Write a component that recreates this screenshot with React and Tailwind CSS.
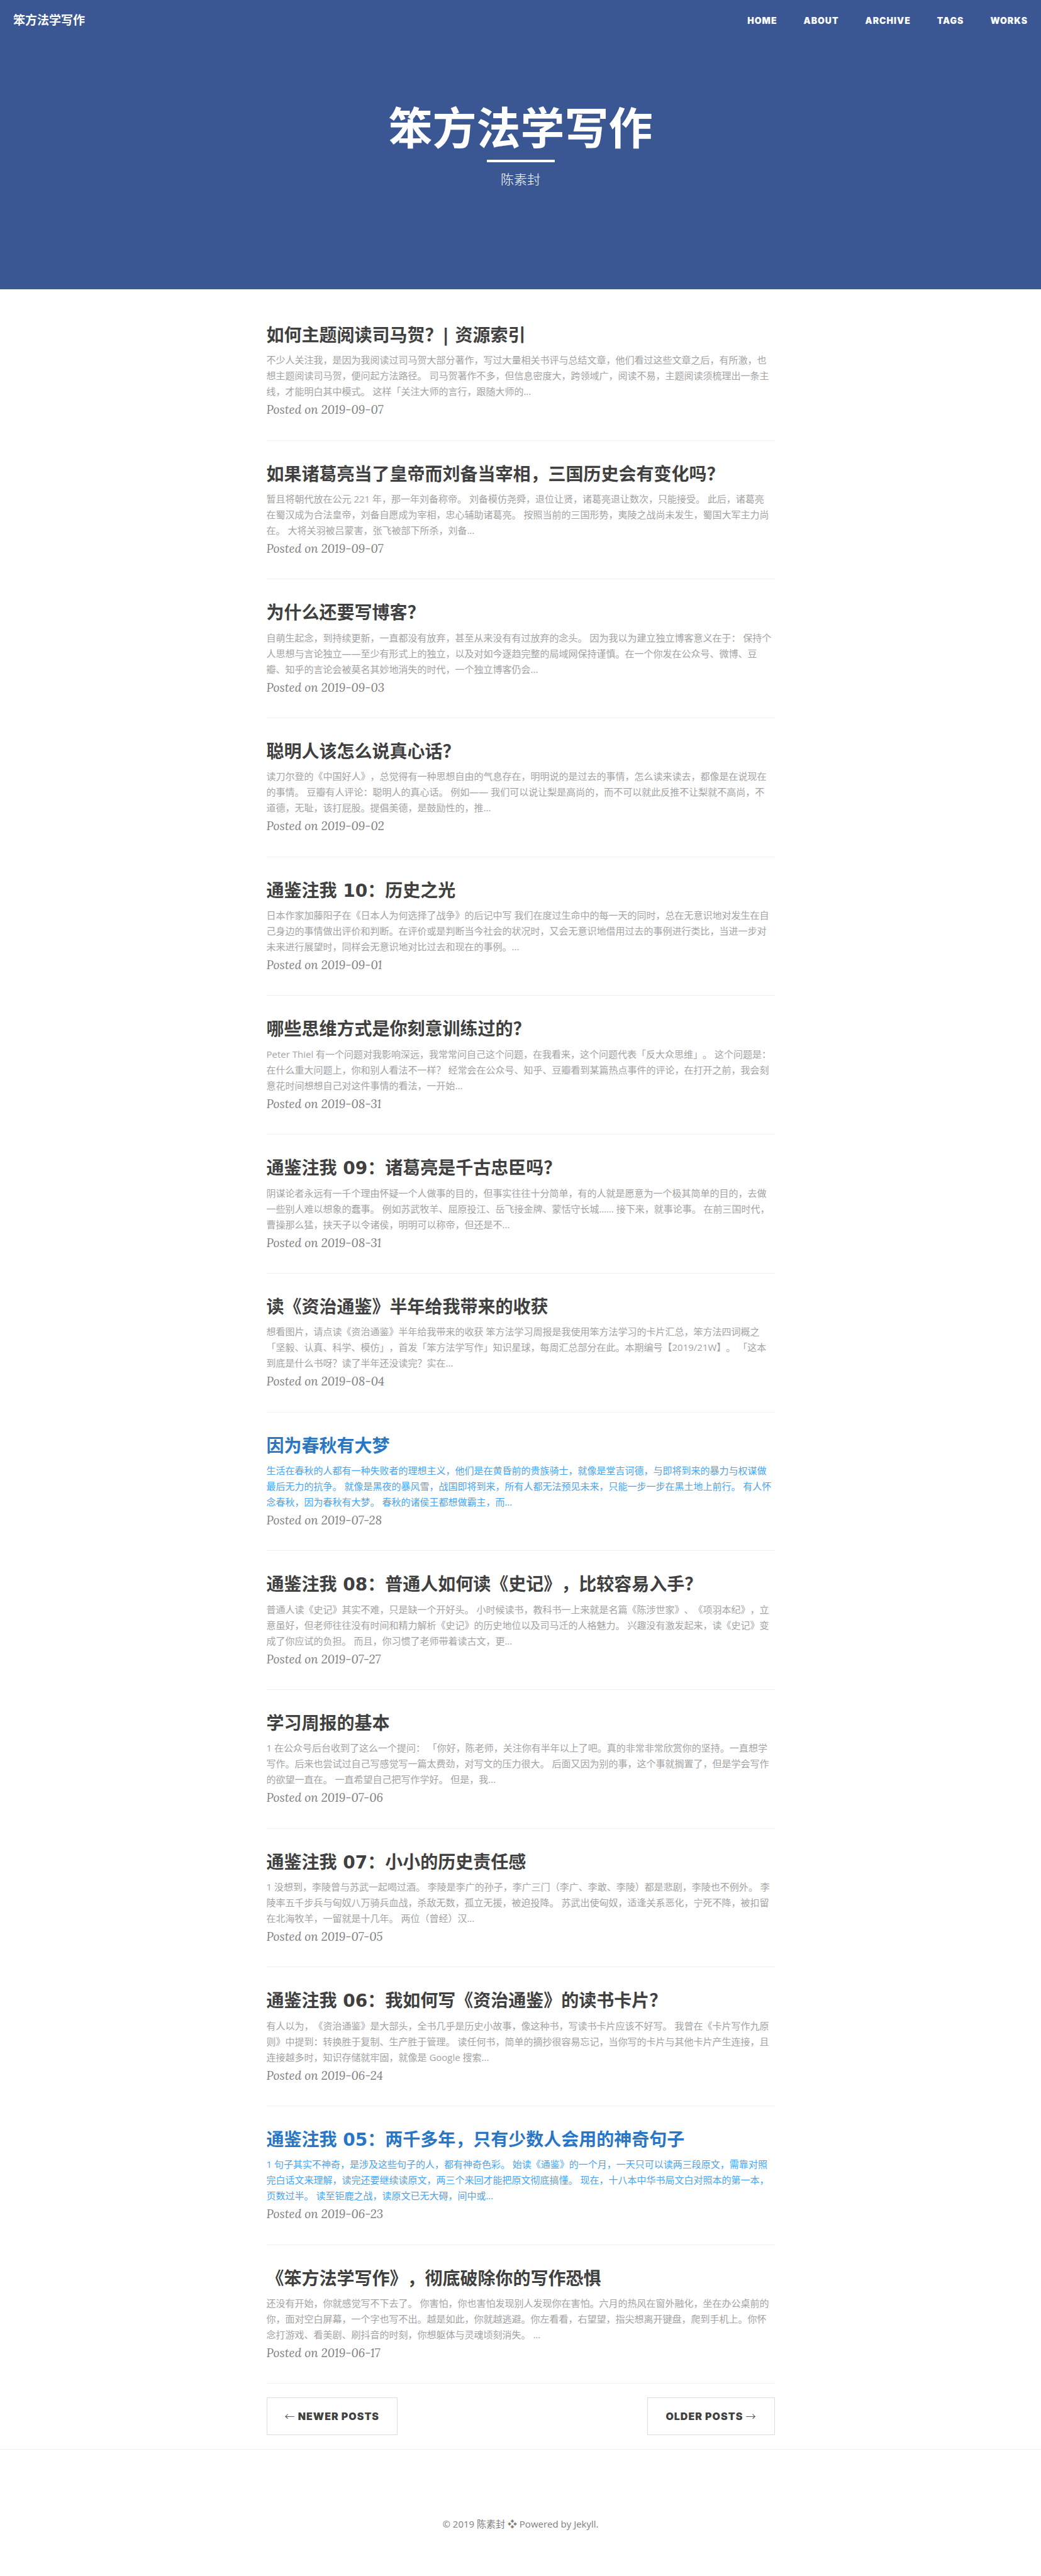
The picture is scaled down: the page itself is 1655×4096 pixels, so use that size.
const navLinks = ["Home", "About", "Archive", "Tags", "Works"];

const posts = [
  {
    title: "如何主题阅读司马贺？| 资源索引",
    date: "2019-09-07",
    lines: [
      "不少人关注我，是因为我阅读过司马贺大部分著作，写过大量相关书评与总结文章，他们看过这些文章之后，有所激，也",
      "想主题阅读司马贺，便问起方法路径。 司马贺著作不多，但信息密度大，跨领域广，阅读不易，主题阅读须梳理出一条主",
      "线，才能明白其中模式。 这样「关注大师的言行，跟随大师的...",
    ],
  },
  {
    title: "如果诸葛亮当了皇帝而刘备当宰相，三国历史会有变化吗？",
    date: "2019-09-07",
    lines: [
      "暂且将朝代放在公元 221 年，那一年刘备称帝。 刘备模仿尧舜，退位让贤，诸葛亮退让数次，只能接受。 此后，诸葛亮",
      "在蜀汉成为合法皇帝，刘备自愿成为宰相，忠心辅助诸葛亮。 按照当前的三国形势，夷陵之战尚未发生，蜀国大军主力尚",
      "在。 大将关羽被吕蒙害，张飞被部下所杀，刘备...",
    ],
  },
  {
    title: "为什么还要写博客？",
    date: "2019-09-03",
    lines: [
      "自萌生起念，到持续更新，一直都没有放弃，甚至从来没有有过放弃的念头。 因为我以为建立独立博客意义在于： 保持个",
      "人思想与言论独立——至少有形式上的独立，以及对如今逐趋完整的局域网保持谨慎。在一个你发在公众号、微博、豆",
      "瓣、知乎的言论会被莫名其妙地消失的时代，一个独立博客仍会...",
    ],
  },
  {
    title: "聪明人该怎么说真心话？",
    date: "2019-09-02",
    lines: [
      "读刀尔登的《中国好人》，总觉得有一种思想自由的气息存在，明明说的是过去的事情，怎么读来读去，都像是在说现在",
      "的事情。 豆瓣有人评论：聪明人的真心话。 例如—— 我们可以说让梨是高尚的，而不可以就此反推不让梨就不高尚，不",
      "道德，无耻，该打屁股。提倡美德，是鼓励性的，推...",
    ],
  },
  {
    title: "通鉴注我 10：历史之光",
    date: "2019-09-01",
    lines: [
      "日本作家加藤阳子在《日本人为何选择了战争》的后记中写 我们在度过生命中的每一天的同时，总在无意识地对发生在自",
      "己身边的事情做出评价和判断。在评价或是判断当今社会的状况时，又会无意识地借用过去的事例进行类比，当进一步对",
      "未来进行展望时，同样会无意识地对比过去和现在的事例。...",
    ],
  },
  {
    title: "哪些思维方式是你刻意训练过的？",
    date: "2019-08-31",
    lines: [
      "Peter Thiel 有一个问题对我影响深远，我常常问自己这个问题，在我看来，这个问题代表「反大众思维」。 这个问题是：",
      "在什么重大问题上，你和别人看法不一样？ 经常会在公众号、知乎、豆瓣看到某篇热点事件的评论，在打开之前，我会刻",
      "意花时间想想自己对这件事情的看法，一开始...",
    ],
  },
  {
    title: "通鉴注我 09：诸葛亮是千古忠臣吗？",
    date: "2019-08-31",
    lines: [
      "阴谋论者永远有一千个理由怀疑一个人做事的目的，但事实往往十分简单，有的人就是愿意为一个极其简单的目的，去做",
      "一些别人难以想象的蠢事。 例如苏武牧羊、屈原投江、岳飞接金牌、蒙恬守长城…… 接下来，就事论事。 在前三国时代，",
      "曹操那么猛，挟天子以令诸侯，明明可以称帝，但还是不...",
    ],
  },
  {
    title: "读《资治通鉴》半年给我带来的收获",
    date: "2019-08-04",
    lines: [
      "想看图片，请点读《资治通鉴》半年给我带来的收获 笨方法学习周报是我使用笨方法学习的卡片汇总，笨方法四词概之",
      "「坚毅、认真、科学、模仿」，首发「笨方法学写作」知识星球，每周汇总部分在此。本期编号【2019/21W】。 「这本",
      "到底是什么书呀？读了半年还没读完？实在...",
    ],
  },
  {
    title: "因为春秋有大梦",
    date: "2019-07-28",
    active: true,
    lines: [
      "生活在春秋的人都有一种失败者的理想主义，他们是在黄昏前的贵族骑士，就像是堂吉诃德，与即将到来的暴力与权谋做",
      "最后无力的抗争。 就像是黑夜的暴风雪，战国即将到来，所有人都无法预见未来，只能一步一步在黑土地上前行。 有人怀",
      "念春秋，因为春秋有大梦。 春秋的诸侯王都想做霸主，而...",
    ],
  },
  {
    title: "通鉴注我 08：普通人如何读《史记》，比较容易入手？",
    date: "2019-07-27",
    lines: [
      "普通人读《史记》其实不难，只是缺一个开好头。 小时候读书，教科书一上来就是名篇《陈涉世家》、《项羽本纪》，立",
      "意虽好，但老师往往没有时间和精力解析《史记》的历史地位以及司马迁的人格魅力。 兴趣没有激发起来，读《史记》变",
      "成了你应试的负担。 而且，你习惯了老师带着读古文，更...",
    ],
  },
  {
    title: "学习周报的基本",
    date: "2019-07-06",
    lines: [
      "1 在公众号后台收到了这么一个提问： 「你好，陈老师，关注你有半年以上了吧。真的非常非常欣赏你的坚持。一直想学",
      "写作。后来也尝试过自己写感觉写一篇太费劲，对写文的压力很大。 后面又因为别的事，这个事就搁置了，但是学会写作",
      "的欲望一直在。 一直希望自己把写作学好。 但是，我...",
    ],
  },
  {
    title: "通鉴注我 07：小小的历史责任感",
    date: "2019-07-05",
    lines: [
      "1 没想到，李陵曾与苏武一起喝过酒。 李陵是李广的孙子，李广三门（李广、李敢、李陵）都是悲剧，李陵也不例外。 李",
      "陵率五千步兵与匈奴八万骑兵血战，杀敌无数，孤立无援，被迫投降。 苏武出使匈奴，适逢关系恶化，宁死不降，被扣留",
      "在北海牧羊，一留就是十几年。 两位（曾经）汉...",
    ],
  },
  {
    title: "通鉴注我 06：我如何写《资治通鉴》的读书卡片？",
    date: "2019-06-24",
    lines: [
      "有人以为，《资治通鉴》是大部头，全书几乎是历史小故事，像这种书，写读书卡片应该不好写。 我曾在《卡片写作九原",
      "则》中提到：转换胜于复制、生产胜于管理。 读任何书，简单的摘抄很容易忘记，当你写的卡片与其他卡片产生连接，且",
      "连接越多时，知识存储就牢固，就像是 Google 搜索...",
    ],
  },
  {
    title: "通鉴注我 05：两千多年，只有少数人会用的神奇句子",
    date: "2019-06-23",
    active: true,
    lines: [
      "1 句子其实不神奇，是涉及这些句子的人，都有神奇色彩。 始读《通鉴》的一个月，一天只可以读两三段原文，需靠对照",
      "完白话文来理解，读完还要继续读原文，两三个来回才能把原文彻底搞懂。 现在，十八本中华书局文白对照本的第一本，",
      "页数过半。 读至钜鹿之战，读原文已无大碍，间中或...",
    ],
  },
  {
    title: "《笨方法学写作》，彻底破除你的写作恐惧",
    date: "2019-06-17",
    lines: [
      "还没有开始，你就感觉写不下去了。 你害怕，你也害怕发现别人发现你在害怕。六月的热风在窗外融化，坐在办公桌前的",
      "你，面对空白屏幕，一个字也写不出。越是如此，你就越逃避。你左看看，右望望，指尖想离开键盘，爬到手机上。你怀",
      "念打游戏、看美剧、刷抖音的时刻，你想躯体与灵魂顷刻消失。 ...",
    ],
  },
];

function Header() {
  return (
    <header className="bg-[#3a5793] pb-[160px] text-white">
      <nav className="flex h-16 items-center justify-between px-[21px]">
        <a href="#" className="text-[19px] leading-8 font-bold">
          笨方法学写作
        </a>
        <ul className="flex gap-[42px]">
          {navLinks.map((label) => (
            <li key={label}>
              <a
                href="#"
                className="font-['Arial_Black','Inter',sans-serif] text-[14px] leading-5 font-black tracking-[1px] uppercase"
              >
                {label}
              </a>
            </li>
          ))}
        </ul>
      </nav>
      <div className="flex flex-col items-center pt-[100px]">
        <h1 className="text-[70px] leading-[78px] font-bold">笨方法学写作</h1>
        <hr className="mt-3 h-1 w-[108px] border-0 bg-white" />
        <p className="mt-[13px] text-[21px] leading-[29px] font-light">陈素封</p>
      </div>
    </header>
  );
}

function PostPreview({ post }) {
  return (
    <article className="border-b border-[#eeeeee] pt-9 pb-8">
      <a href="#">
        <h2
          className={`font-['DejaVu_Sans','Noto_Sans_CJK_SC',sans-serif] text-[28px] leading-[1.3] font-bold whitespace-nowrap ${
            post.active ? "text-[#2977c4]" : "text-[#404040]"
          }`}
        >
          {post.title}
        </h2>
        <p
          className={`mt-2 text-[15px] leading-[25px] ${
            post.active ? "text-[#4aa3ee]" : "text-[#a3a3a3]"
          }`}
        >
          {post.lines.map((line) => (
            <span key={line} className="block whitespace-nowrap">
              {line}
            </span>
          ))}
        </p>
      </a>
      <p className="font-['Lora','Liberation_Serif',serif] text-[19px] leading-[1.7] text-[#808080] italic">
        Posted on {post.date}
      </p>
    </article>
  );
}

function Arrow({ children }) {
  return <span className="font-['Noto_Sans_CJK_SC',sans-serif] font-light">{children}</span>;
}

function PagerLink({ children }) {
  return (
    <a
      href="#"
      className="border border-[#dddddd] px-[28px] py-[18px] font-['Arial_Black','Inter',sans-serif] text-[16px] leading-[21px] font-black tracking-[1px] text-[#404040] uppercase"
    >
      {children}
    </a>
  );
}

export default function App() {
  return (
    <div className="min-h-screen bg-white font-['Open_Sans','Noto_Sans_CJK_SC',sans-serif] [text-spacing-trim:space-all]">
      <Header />
      <main className="mx-auto max-w-[808px] pt-5">
        {posts.map((post) => (
          <PostPreview key={post.title} post={post} />
        ))}
        <div className="mt-[22px] flex justify-between">
          <PagerLink>
            <Arrow>←</Arrow> Newer Posts
          </PagerLink>
          <PagerLink>
            Older Posts <Arrow>→</Arrow>
          </PagerLink>
        </div>
      </main>
      <footer className="mt-[22px] border-t border-[#eeeeee] pt-[105px] pb-[71px] text-center text-[15px] leading-[26px] text-[#808080]">
        © 2019 陈素封 ❖ Powered by Jekyll.
      </footer>
    </div>
  );
}
